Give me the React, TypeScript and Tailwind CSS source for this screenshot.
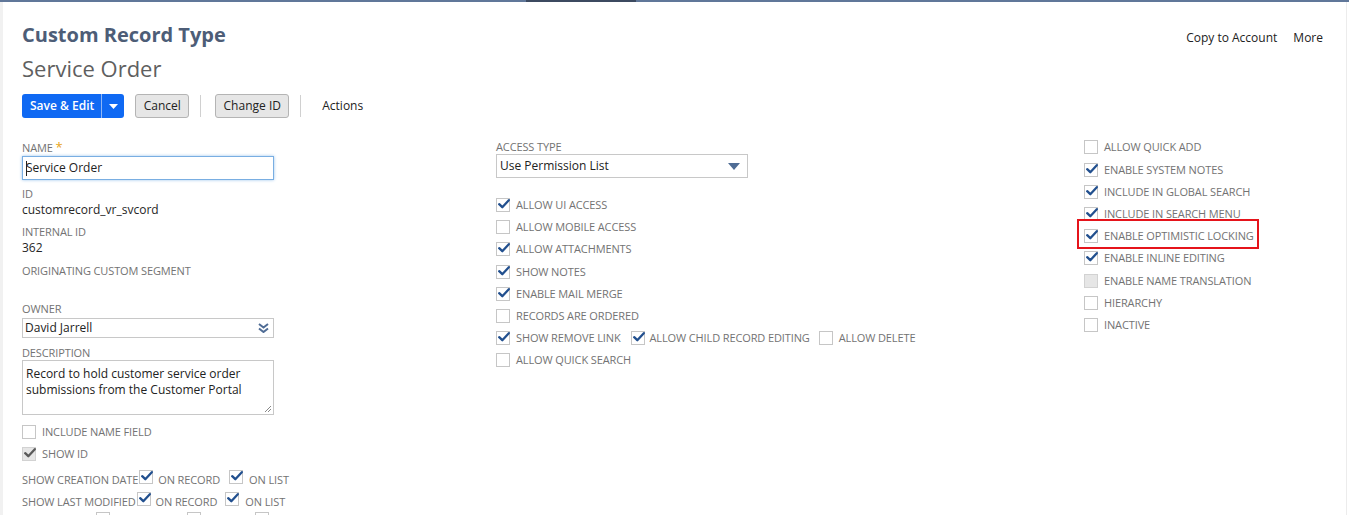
import React from "react";

type CbProps = { checked?: boolean; disabled?: boolean };

const Cb = ({ checked, disabled }: CbProps) => (
  <span
    className={
      "relative inline-block w-[14px] h-[14px] shrink-0 border " +
      (disabled ? "bg-[#e6e6e6] border-[#d2d2d2]" : "bg-white border-[#c6c6c6]")
    }
  >
    {checked && (
      <svg
        className="absolute left-[1px] top-[-1px]"
        width="12"
        height="12"
        viewBox="0 0 12 12"
      >
        <path
          d="M1.2 6.2 L4.3 9.2 L10.8 2.2"
          stroke={disabled ? "#5a5a5a" : "#22508f"}
          strokeWidth="2.3"
          fill="none"
          strokeLinecap="round"
          strokeLinejoin="round"
        />
      </svg>
    )}
  </span>
);

const Label = ({ children, className = "" }: { children: React.ReactNode; className?: string }) => (
  <div className={"text-[11px] leading-[14px] uppercase tracking-[-0.12px] text-[#737373] whitespace-nowrap " + className}>{children}</div>
);

const CbRow = ({
  checked,
  disabled,
  label,
}: {
  checked?: boolean;
  disabled?: boolean;
  label: string;
}) => (
  <div className="flex items-center h-[22px] whitespace-nowrap">
    <Cb checked={checked} disabled={disabled} />
    <span className="ml-[6px] text-[11px] uppercase tracking-[-0.12px] text-[#737373] leading-[14px]">{label}</span>
  </div>
);

const Gap = () => <div className="h-px" />;

export default function App() {
  return (
    <div
      className="relative w-[1349px] h-[515px] overflow-hidden bg-white"
      style={{ fontFamily: "'Open Sans', 'Liberation Sans', sans-serif" }}
    >
      {/* top bar */}
      <div className="flex h-[2px]">
        <div className="w-[526px] bg-[#607799]" />
        <div className="w-[110px] bg-[#3c4a60]" />
        <div className="flex-1 bg-[#607799]" />
      </div>
      <div className="flex h-[513px]">
        <div className="w-[3px] bg-[#f1f1f1]" />
        <div className="flex-1 pl-[19px] pr-[23px]">
          {/* header */}
          <div className="flex justify-between">
            <div>
              <div className="mt-[21px] text-[20px] leading-[24px] font-bold text-[#4d5d77]">
                Custom Record Type
              </div>
              <div className="mt-[8px] text-[22px] leading-[26px] text-[#5f5f5f]">Service Order</div>
            </div>
            <div className="flex mt-[27px] h-[18px] items-center text-[12px] text-[#222]">
              <span>Copy to Account</span>
              <span className="ml-[16px]">More</span>
            </div>
          </div>
          {/* buttons */}
          <div className="flex items-center mt-[13px] h-[24px]">
            <div className="flex h-[24px] rounded-[3px] bg-[#0f69f3] text-white text-[12px] font-semibold">
              <span className="pl-[8px] pr-[7px] leading-[24px]">Save &amp; Edit</span>
              <span className="w-px bg-[#8fb6f5]" />
              <span className="w-[22px] flex items-center justify-center">
                <svg width="9" height="5" viewBox="0 0 9 5">
                  <path d="M0 0 H9 L4.5 5 Z" fill="#fff" />
                </svg>
              </span>
            </div>
            <span className="ml-[11px] h-[24px] w-[54px] text-center leading-[22px] rounded-[3px] border border-[#b4b4b4] bg-[#e6e6e6] text-[12px] text-[#222]">
              Cancel
            </span>
            <span className="ml-[11px] w-px h-[22px] bg-[#d0d0d0]" />
            <span className="ml-[14px] h-[24px] w-[74px] text-center leading-[22px] rounded-[3px] border border-[#b4b4b4] bg-[#e6e6e6] text-[12px] text-[#222]">
              Change ID
            </span>
            <span className="ml-[11px] w-px h-[22px] bg-[#d0d0d0]" />
            <span className="ml-[21px] text-[12px] text-[#222]">Actions</span>
          </div>

          {/* fields */}
          <div className="grid grid-cols-[474px_588px_1fr] mt-[22px]">
            {/* left */}
            <div className="w-[252px]">
              <Label>
                Name <span className="text-[#e8a317] text-[13px]">*</span>
              </Label>
              <div className="mt-px h-[24px] border border-[#79aee2] shadow-[0_0_3px_#9cc4ec] flex items-center pl-[3px] text-[12px] text-[#222]">
                <span className="w-px h-[15px] bg-[#222] mr-[-1px]" />
                Service Order
              </div>
              <Label className="mt-[7px]">ID</Label>
              <div className="mt-px text-[12px] leading-[16px] text-[#262626]">customrecord_vr_svcord</div>
              <Label className="mt-[7px]">Internal ID</Label>
              <div className="mt-px text-[12px] leading-[16px] text-[#262626]">362</div>
              <Label className="mt-[8px]">Originating Custom Segment</Label>
              <Label className="mt-[24px]">Owner</Label>
              <div className="mt-[2px] h-[20px] border border-[#c8c8c8] flex items-center justify-between pl-[2px] pr-[4px] text-[12px] text-[#222]">
                <span>David Jarrell</span>
                <svg width="11" height="10" viewBox="0 0 11 10">
                  <path d="M1 1 L5.5 4.5 L10 1" stroke="#4f6c95" strokeWidth="2" fill="none" />
                  <path d="M1 5.5 L5.5 9 L10 5.5" stroke="#4f6c95" strokeWidth="2" fill="none" />
                </svg>
              </div>
              <Label className="mt-[8px]">Description</Label>
              <div className="relative h-[55px] border border-[#c8c8c8] px-[3px] pt-[5px] text-[12px] leading-[16px] text-[#222]">
                Record to hold customer service order
                <br />
                submissions from the Customer Portal
                <svg className="absolute right-[1px] bottom-[1px]" width="8" height="8" viewBox="0 0 8 8">
                  <path d="M7 1 L1 7 M7 4 L4 7" stroke="#888" strokeWidth="1" />
                </svg>
              </div>
              <div className="mt-[6px]">
                <CbRow label="Include Name Field" />
                <CbRow label="Show ID" checked disabled />
              </div>
              <div className="mt-[2px] flex items-end h-[22px] w-max whitespace-nowrap text-[11px] uppercase tracking-[-0.12px] text-[#737373]">
                <span className="leading-[14px] mb-[2px]">Show Creation Date</span>
                <span className="ml-px mb-[5px] flex"><Cb checked /></span>
                <span className="ml-[5px] leading-[14px] mb-[2px]">On Record</span>
                <span className="ml-[9px] mb-[5px] flex"><Cb checked /></span>
                <span className="ml-[6px] leading-[14px] mb-[2px]">On List</span>
              </div>
              <div className="flex items-end h-[21px] w-max whitespace-nowrap text-[11px] uppercase tracking-[-0.12px] text-[#737373]">
                <span className="leading-[14px] mb-[1px]">Show Last Modified</span>
                <span className="ml-px mb-[4px] flex"><Cb checked /></span>
                <span className="ml-[5px] leading-[14px] mb-[1px]">On Record</span>
                <span className="ml-[8px] mb-[4px] flex"><Cb checked /></span>
                <span className="ml-[6px] leading-[14px] mb-[1px]">On List</span>
              </div>
              <div className="flex mt-[2px]">
                <span className="ml-[74px] flex"><Cb /></span>
                <span className="ml-[77px] flex"><Cb /></span>
                <span className="ml-[54px] flex"><Cb /></span>
              </div>
            </div>

            {/* middle */}
            <div>
              <Label>Access Type</Label>
              <div className="w-[252px] h-[24px] border border-[#c8c8c8] flex items-center justify-between pl-[3px] pr-[7px] text-[12px] text-[#222]">
                <span>Use Permission List</span>
                <svg width="12" height="7" viewBox="0 0 12 7">
                  <path d="M0 0 H12 L6 7 Z" fill="#4f6c95" />
                </svg>
              </div>
              <div className="mt-[16px]">
                <CbRow checked label="Allow UI Access" />
                <CbRow label="Allow Mobile Access" />
                <CbRow checked label="Allow Attachments" />
                <Gap />
                <CbRow checked label="Show Notes" />
                <CbRow checked label="Enable Mail Merge" />
                <CbRow label="Records Are Ordered" />
                <div className="flex items-center h-[22px] whitespace-nowrap">
                  <Cb checked />
                  <span className="ml-[6px] text-[11px] uppercase tracking-[-0.12px] text-[#737373] leading-[14px]">Show Remove Link</span>
                  <span className="ml-[10px] flex"><Cb checked /></span>
                  <span className="ml-[5px] text-[11px] uppercase tracking-[-0.12px] text-[#737373] leading-[14px]">Allow Child Record Editing</span>
                  <span className="ml-[9px] flex"><Cb /></span>
                  <span className="ml-[6px] text-[11px] uppercase tracking-[-0.12px] text-[#737373] leading-[14px]">Allow Delete</span>
                </div>
                <CbRow label="Allow Quick Search" />
              </div>
            </div>

            {/* right */}
            <div className="-mt-[4px]">
              <CbRow label="Allow Quick Add" />
              <Gap />
              <CbRow checked label="Enable System Notes" />
              <CbRow checked label="Include in Global Search" />
              <CbRow checked label="Include in Search Menu" />
              <div className="relative">
                <CbRow checked label="Enable Optimistic Locking" />
                <div className="absolute left-[-7px] top-[-6px] w-[182px] h-[30px] border-2 border-[#e5141b]" />
              </div>
              <CbRow checked label="Enable Inline Editing" />
              <Gap />
              <CbRow disabled label="Enable Name Translation" />
              <CbRow label="Hierarchy" />
              <CbRow label="Inactive" />
            </div>
          </div>
        </div>
        <div className="w-px bg-[#ececec] mr-[2px]" />
      </div>
    </div>
  );
}
